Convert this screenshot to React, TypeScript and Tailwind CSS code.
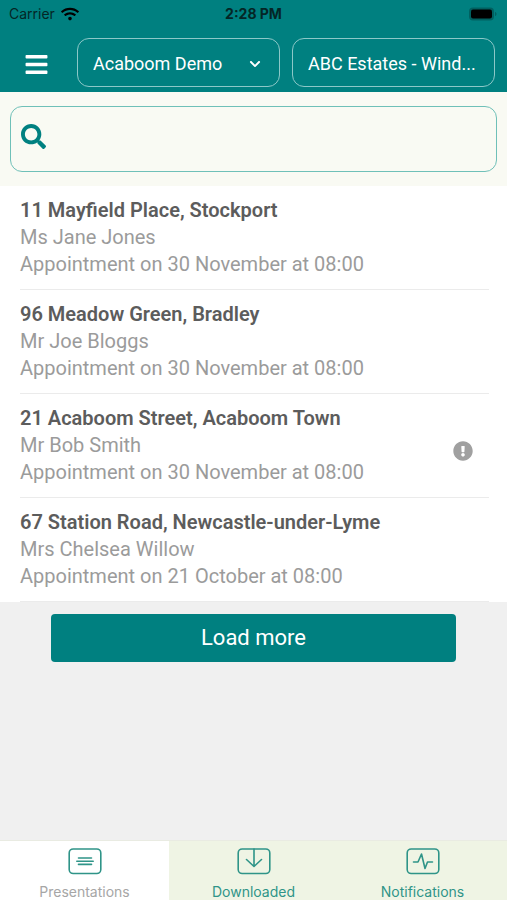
import { useState } from 'react'
import type { ReactNode } from 'react'
import { FaBars, FaChevronDown, FaExclamationCircle, FaSearch, FaWifi } from 'react-icons/fa'

type Appointment = { address: string; client: string; when: string; alert?: boolean }

const appointments: Appointment[] = [
  { address: '11 Mayfield Place, Stockport', client: 'Ms Jane Jones', when: '30 November at 08:00' },
  { address: '96 Meadow Green, Bradley', client: 'Mr Joe Bloggs', when: '30 November at 08:00' },
  { address: '21 Acaboom Street, Acaboom Town', client: 'Mr Bob Smith', when: '30 November at 08:00', alert: true },
  { address: '67 Station Road, Newcastle-under-Lyme', client: 'Mrs Chelsea Willow', when: '21 October at 08:00' },
]

function TabIcon({ children }: { children: ReactNode }) {
  return (
    <svg className="shrink-0" width="34" height="28" viewBox="0 0 34 28" fill="none" stroke="#2f9488" strokeWidth="1.6" strokeLinecap="round" strokeLinejoin="round" aria-hidden="true">
      <rect x="1.200" y="2" width="31.600" height="24.500" rx="4" />
      {children}
    </svg>
  )
}

const tabs = [
  { name: 'Presentations', icon: <path d="M10.500 11h13M8.800 14.200h16.400M10.500 17.400h13" /> },
  { name: 'Downloaded', icon: <path d="M17 2v17M9.500 12.500l7.500 7 7.500-7" /> },
  { name: 'Notifications', icon: <path d="M7.500 15h4.500l3.500-8 3.500 14.500 2.500-6.500h5" /> },
]

export default function App() {
  const [query, setQuery] = useState('')
  const [tab, setTab] = useState('Presentations')

  return (
    <div className="flex min-h-screen flex-col bg-[#f0f0f0] font-['Roboto',sans-serif]">
      <header className="bg-[#008080] pb-[5px]">
        {/* Status bar */}
        <div className="grid h-[28px] grid-cols-3 items-center px-[9px] font-['Inter',sans-serif] text-[14px] leading-[20px] text-[#042626]">
          <div className="flex items-center gap-[6px]">
            <span>Carrier</span>
            <FaWifi className="size-[18px] text-black" />
          </div>
          <span className="text-center font-bold">2:28 PM</span>
          <svg className="justify-self-end" width="30" height="14" viewBox="0 0 30 14" aria-hidden="true">
            <rect x="1" y="0.500" width="25" height="13" rx="4" fill="#006060" />
            <rect x="3" y="2.500" width="21" height="9" rx="2" fill="#000" />
            <path d="M27 5v4c2-.5 2-3.500 0-4" fill="#006060" />
          </svg>
        </div>

        {/* Menu and branch pickers */}
        <div className="flex items-center pr-[12px] pt-[10px]">
          <button type="button" aria-label="Menu" className="flex w-[77px] justify-center pr-[5px] pt-[4px] text-white">
            <FaBars className="size-[25px]" />
          </button>
          <div className="grid min-w-0 flex-1 grid-cols-2 gap-[12px] text-[18px] leading-[24px] text-white">
            <div className="relative">
              <select aria-label="Company" className="h-[49px] w-full appearance-none rounded-[12px] border border-[#8cc8c8] bg-transparent pl-[15px] pr-[36px] pt-[2px]">
                <option>Acaboom Demo</option>
              </select>
              <FaChevronDown className="pointer-events-none absolute right-[19px] top-[20px] size-[12px]" />
            </div>
            <select aria-label="Branch" className="h-[49px] w-full appearance-none rounded-[12px] border border-[#8cc8c8] bg-transparent px-[15px] pt-[2px]">
              <option>ABC Estates - Wind...</option>
            </select>
          </div>
        </div>
      </header>

      <div className="bg-[#f9faf3] px-[10px] pb-[14px] pt-[14px]">
        <label className="flex h-[66px] rounded-[12px] border border-[#6fc0b8] px-[10px] pt-[17px]">
          <FaSearch className="size-[25px] shrink-0 text-[#008080]" />
          <input
            type="search"
            aria-label="Search presentations"
            value={query}
            onChange={e => setQuery(e.target.value)}
            className="h-[25px] min-w-0 flex-1 bg-transparent pl-[12px] text-[20px] text-[#555] outline-none"
          />
        </label>
      </div>

      <ul className="bg-white pl-[20px] pr-[18px] text-[20px] leading-[27px] text-[#9b9b9b]">
        {appointments.map(a => (
          <li key={a.address} className="flex items-center justify-between border-b border-[#ebebeb] pb-[11px] pr-[16px] pt-[11px]">
            <div>
              <h2 className="font-semibold text-[#5c5c5c]">{a.address}</h2>
              <p>{a.client}</p>
              <p>Appointment on {a.when}</p>
            </div>
            {a.alert && <FaExclamationCircle className="mt-[11px] size-[20px] text-[#a0a0a0]" title="Needs attention" />}
          </li>
        ))}
      </ul>

      <div className="flex-1 px-[51px] pt-[12px]">
        <button type="button" className="h-[48px] w-full rounded-[4px] bg-[#008080] text-[22px] leading-[28px] text-white">
          Load more
        </button>
      </div>

      <nav className="grid grid-cols-3 border-t border-[#e9ebe2]">
        {tabs.map(t => (
          <button
            key={t.name}
            type="button"
            onClick={() => setTab(t.name)}
            className={`flex h-[59px] flex-col items-center gap-[7px] pt-[6px] font-['Inter',sans-serif] text-[14px] leading-[20px] ${tab === t.name ? 'bg-white text-[#a6a6a6]' : 'bg-[#eff4e4] text-[#2f9488]'}`}
          >
            <TabIcon>{t.icon}</TabIcon>
            {t.name}
          </button>
        ))}
      </nav>
    </div>
  )
}
